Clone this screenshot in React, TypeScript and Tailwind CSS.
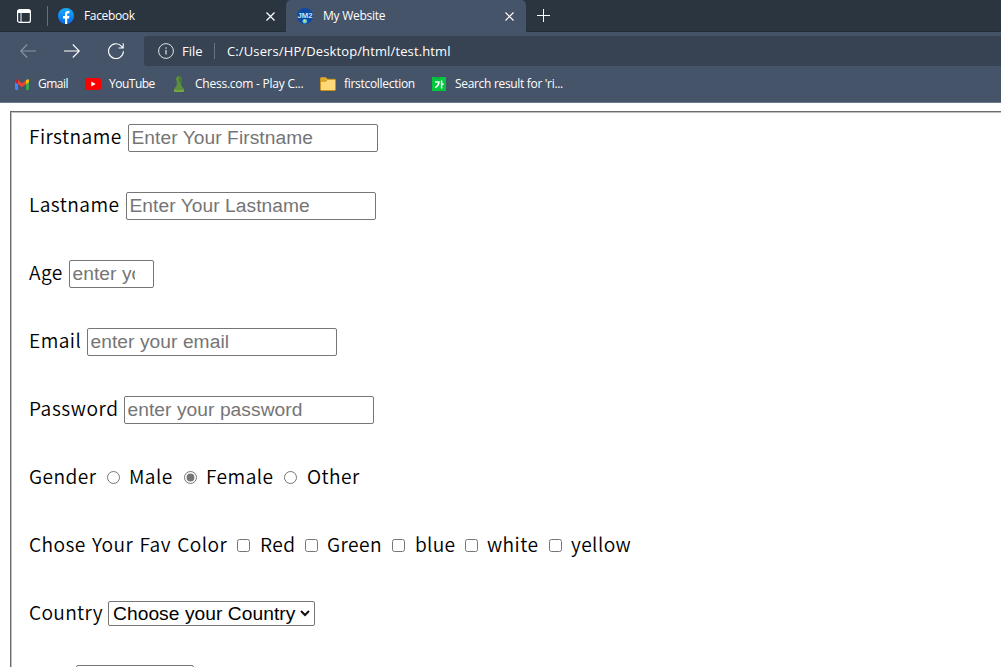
import React from "react";

const ui = "font-['Open_Sans','Liberation_Sans',sans-serif] text-white whitespace-nowrap";

function Facebook() {
  return (
    <svg width="16" height="16" viewBox="0 0 16 16">
      <defs>
        <linearGradient id="fb" x1="0" y1="0" x2="0" y2="1">
          <stop offset="0" stopColor="#1aafff" />
          <stop offset="1" stopColor="#0866e8" />
        </linearGradient>
      </defs>
      <circle cx="8" cy="8" r="8" fill="url(#fb)" />
      <path d="M7 16V10.4H5V8h2V6.3c0-2.1 1.2-3.2 3-3.2.8 0 1.400.1 1.400.1v2h-1c-1 0-1.200.6-1.200 1.200V8h2.200l-.4 2.400H9.200V16z" fill="#fff" />
    </svg>
  );
}

function SiteIcon() {
  return (
    <svg width="16" height="16" viewBox="0 0 16 16">
      <circle cx="8" cy="8" r="8" fill="#0d4aa3" />
      <text x="8" y="10.300" textAnchor="middle" fontSize="7.500" fontWeight="700" fontFamily="Liberation Sans, sans-serif" fill="#d5e2ee" textLength="15" lengthAdjust="spacingAndGlyphs">JM2</text>
      <circle cx="7.800" cy="13.200" r="2.300" fill="#62c3e8" />
      <path d="M6.500 12l1.500-.6.8 1.500-1 1.700z" fill="#d9e86a" />
    </svg>
  );
}

function Close() {
  return (
    <svg width="9" height="9" viewBox="0 0 9 9" stroke="#fff" strokeWidth="1.200">
      <path d="M.5.5l8 8M8.500.5l-8 8" />
    </svg>
  );
}

function Gmail() {
  return (
    <svg width="14" height="11" viewBox="0 0 14 11">
      <path d="M0 2v8q0 1 1 1h2V4z" fill="#4285f4" />
      <path d="M14 2v8q0 1-1 1h-2V4z" fill="#34a853" />
      <path d="M11 1.300L12 .4Q14-.4 14 1.500V3l-3 2.300z" fill="#fbbc04" />
      <path d="M3 1.300L2 .4Q0-.4 0 1.500V3l3 2.300z" fill="#c5221f" />
      <path d="M3 1.300l4 3 4-3v4L7 8.300l-4-3z" fill="#ea4335" />
    </svg>
  );
}

function YouTube() {
  return (
    <svg width="16" height="12" viewBox="0 0 16 12">
      <rect width="16" height="12" rx="2.500" fill="#f00" />
      <path d="M6.300 3.400v5.200L10.600 6z" fill="#fff" />
    </svg>
  );
}

function Pawn() {
  return (
    <svg width="12" height="16" viewBox="0 0 12 16">
      <path d="M6 0a3 3 0 0 1 2 5.200l1.300 1.300H7.800c.2 2.500.8 3.800 2 5C11 12.600 11.500 14 11 15.400q-5 1-10 0C.5 14 1 12.600 2.200 11.500c1.200-1.200 1.800-2.500 2-5H2.700L4 5.200A3 3 0 0 1 6 0z" fill="#5c8f3c" />
      <path d="M1 13.800q5 1.300 10 0v1.600q-5 1-10 0z" fill="#78ad46" />
      <path d="M6 0a3 3 0 0 1 2 5.200l1.300 1.300H6z" fill="#477a32" />
    </svg>
  );
}

function Folder() {
  return (
    <svg width="16" height="14" viewBox="0 0 16 14">
      <path d="M.5 12.500v-11q0-1 1-1h4.300l1.700 1.800h7q1 0 1 1v9.200q0 1-1 1h-13q-1 0-1-1z" fill="#ffd977" stroke="#c8941d" />
      <path d="M1 1h4.700l1.300 1.500L5.500 4H1z" fill="#e3a92c" />
      <path d="M1 4.200h4.800L7.300 2.700" stroke="#b98516" fill="none" strokeWidth=".8" />
    </svg>
  );
}

function Naver() {
  return (
    <svg width="14" height="14" viewBox="0 0 14 14">
      <rect width="14" height="14" fill="#00c73c" />
      <path d="M3 1.500l4.500-1" stroke="#18984a" />
      <path d="M3 4.900h4Q6.800 8.800 3 10.600M9.600 3.500v8M9.600 7.200h2" stroke="#fff" strokeWidth="1.500" fill="none" />
    </svg>
  );
}

function Tabs() {
  return (
    <div className="flex h-[32px] bg-[#2b3540] shadow-[inset_0_-1px_0_#242d37]">
      <div className="flex w-[286px] items-center">
        <svg className="ml-[17px]" width="14" height="14" viewBox="0 0 14 14">
          <rect x=".6" y=".6" width="12.800" height="12.800" rx="2" fill="none" stroke="#fff" strokeWidth="1.200" />
          <path d="M1 1h12v3H1z" fill="#fff" />
          <path d="M4 4v9" stroke="#fff" />
        </svg>
        <div className="ml-[16px] h-[20px] w-px bg-[#66707b]" />
        <div className="ml-[10px]"><Facebook /></div>
        <div className={ui + " ml-[10px] w-[182px] text-[12px] leading-[16px] tracking-[-0.35px]"}>Facebook</div>
        <Close />
      </div>
      <div className="flex w-[240px] items-center rounded-t-[5px] bg-[#455468]">
        <div className="ml-[11px]"><SiteIcon /></div>
        <div className={ui + " ml-[10px] w-[182px] text-[12px] leading-[16px] tracking-[-0.25px]"}>My Website</div>
        <Close />
      </div>
      <svg className="mt-[9px] ml-[11px]" width="13" height="13" viewBox="0 0 13 13" stroke="#fff">
        <path d="M0 6.500h13M6.500 0v13" />
      </svg>
    </div>
  );
}

function Toolbar() {
  return (
    <div className="flex h-[38px] items-center">
      <svg className="ml-[20px]" width="16" height="14" viewBox="0 0 16 14" fill="none" stroke="#8b95a2" strokeWidth="1.100">
        <path d="M16 7H.8M7.200.5L.7 7l6.500 6.500" />
      </svg>
      <svg className="ml-[28px]" width="16" height="14" viewBox="0 0 16 14" fill="none" stroke="#fff" strokeWidth="1.100">
        <path d="M0 7h15.200M8.800.5L15.300 7l-6.500 6.500" />
      </svg>
      <svg className="ml-[28px]" width="16" height="16" viewBox="0 0 16 16" fill="none" stroke="#fff" strokeWidth="1.100">
        <path d="M15.400 8.200A7.400 7.400 0 1 1 13.600 3.300L15 5M15.200.3V5h-4.600" />
      </svg>
      <div className="ml-[20px] flex h-[30px] flex-1 items-center rounded-l-[3px] bg-[#374353]">
        <svg className="ml-[14px]" width="16" height="16" viewBox="0 0 16 16" fill="none" stroke="#dfe3e8">
          <circle cx="8" cy="8" r="7.400" />
          <path d="M8 7v4.500M8 4.300v1.400" strokeWidth="1.200" />
        </svg>
        <div className={ui + " ml-[8px] w-[32px] text-[13px] leading-[18px]"}>File</div>
        <div className="h-[16px] w-px bg-[#69737f]" />
        <div className={ui + " ml-[12px] text-[13px] leading-[18px] tracking-[0.12px]"}>C:/Users/HP/Desktop/html/test.html</div>
      </div>
    </div>
  );
}

const bookmark = ui + " text-[12px] leading-[16px]";

function Bookmarks() {
  return (
    <div className="flex h-[33px] items-center pb-[5px] pl-[15px]">
      <Gmail />
      <div className={bookmark + " ml-[9px] w-[47px] tracking-[-0.5px]"}>Gmail</div>
      <YouTube />
      <div className={bookmark + " ml-[8px] w-[64px] tracking-[-0.5px]"}>YouTube</div>
      <Pawn />
      <div className={bookmark + " ml-[10px] w-[125px] tracking-[-0.24px]"}>Chess.com - Play C...</div>
      <Folder />
      <div className={bookmark + " ml-[8px] w-[88px] tracking-[-0.3px]"}>firstcollection</div>
      <Naver />
      <div className={bookmark + " ml-[9px] tracking-[-0.32px]"}>Search result for 'ri...</div>
    </div>
  );
}

const field =
  "h-[28px] shrink-0 rounded-[2px] border border-[#767676] bg-white pl-[2.5px] font-['Liberation_Sans',Arial,sans-serif] text-[19.2px] leading-[22px] tracking-[0.06px] placeholder:text-[#757575] placeholder:opacity-100 outline-none";
const row = "mb-[40px] flex h-[28px] items-center";
const label = "-mt-[5px]";
const tick = "m-0 -mt-[2px] size-[13px] accent-[#757575]";

export default function App() {
  return (
    <div className="h-[667px] w-[1001px] overflow-hidden bg-white">
      <header className="h-[103px] border-b border-[#6d7b8f] bg-[#455468]">
        <Tabs />
        <Toolbar />
        <Bookmarks />
      </header>
      <main className="mt-[8px] ml-[10px] h-[600px] border-t border-l border-[#6b6b6b] bg-white">
        <form className="h-full border-t border-l border-[#c0c0c0] pt-[11px] pl-[17px] font-['Noto_Sans_CJK_SC',sans-serif] text-[19.2px] leading-[28px] font-[350] tracking-[0.42px] whitespace-nowrap text-black">
          <div className={row}>
            <label className={label + " w-[99px]"}>Firstname</label>
            <input className={field + " w-[250px]"} placeholder="Enter Your Firstname" />
          </div>
          <div className={row}>
            <label className={label + " w-[97px]"}>Lastname</label>
            <input className={field + " w-[250px]"} placeholder="Enter Your Lastname" />
          </div>
          <div className={row}>
            <label className={label + " w-[40px]"}>Age</label>
            <input className={field + " w-[85px] pr-[18px]"} placeholder="enter your age" />
          </div>
          <div className={row}>
            <label className={label + " w-[58px]"}>Email</label>
            <input className={field + " w-[250px]"} placeholder="enter your email" />
          </div>
          <div className={row}>
            <label className={label + " w-[95px] tracking-[0.55px]"}>Password</label>
            <input className={field + " w-[250px]"} type="password" placeholder="enter your password" />
          </div>
          <div className={row}>
            <span className={label + " w-[78px]"}>Gender</span>
            <input type="radio" name="gender" className={tick} />
            <label className={label + " ml-[9px] w-[55px]"}>Male</label>
            <input type="radio" name="gender" defaultChecked className={tick} />
            <label className={label + " ml-[9px] w-[78px]"}>Female</label>
            <input type="radio" name="gender" className={tick} />
            <label className={label + " ml-[10px]"}>Other</label>
          </div>
          <div className={row}>
            <span className={label + " w-[208px] [word-spacing:1.5px]"}>Chose Your Fav Color</span>
            <input type="checkbox" className={tick} />
            <label className={label + " ml-[10px] w-[45px]"}>Red</label>
            <input type="checkbox" className={tick} />
            <label className={label + " ml-[9px] w-[65px]"}>Green</label>
            <input type="checkbox" className={tick} />
            <label className={label + " ml-[10px] w-[50px] tracking-[0.3px]"}>blue</label>
            <input type="checkbox" className={tick} />
            <label className={label + " ml-[9px] w-[62px]"}>white</label>
            <input type="checkbox" className={tick} />
            <label className={label + " ml-[9px]"}>yellow</label>
          </div>
          <div className={row}>
            <label className={label + " w-[79px] tracking-[0.3px]"}>Country</label>
            <div className="-mt-[2px] grid h-[25px] w-[207px] items-center">
              <select className="col-start-1 row-start-1 h-[25px] w-[207px] appearance-none rounded-[2px] border border-[#767676] bg-white pt-[1px] pl-[4px] font-['Liberation_Sans',Arial,sans-serif] text-[19.2px] leading-[22px] font-normal tracking-[0.06px] text-black">
                <option>Choose your Country</option>
              </select>
              <svg className="pointer-events-none col-start-1 row-start-1 mr-[5px] justify-self-end" width="10" height="7" viewBox="0 0 10 7" fill="none" stroke="#111" strokeWidth="2">
                <path d="M1 1l4 4 4-4" />
              </svg>
            </div>
          </div>
          <div className="-mt-[3px] flex pl-[47px]">
            <div className="h-[25px] w-[118px] rounded-[2px] border border-[#767676] bg-white" />
          </div>
        </form>
      </main>
    </div>
  );
}
